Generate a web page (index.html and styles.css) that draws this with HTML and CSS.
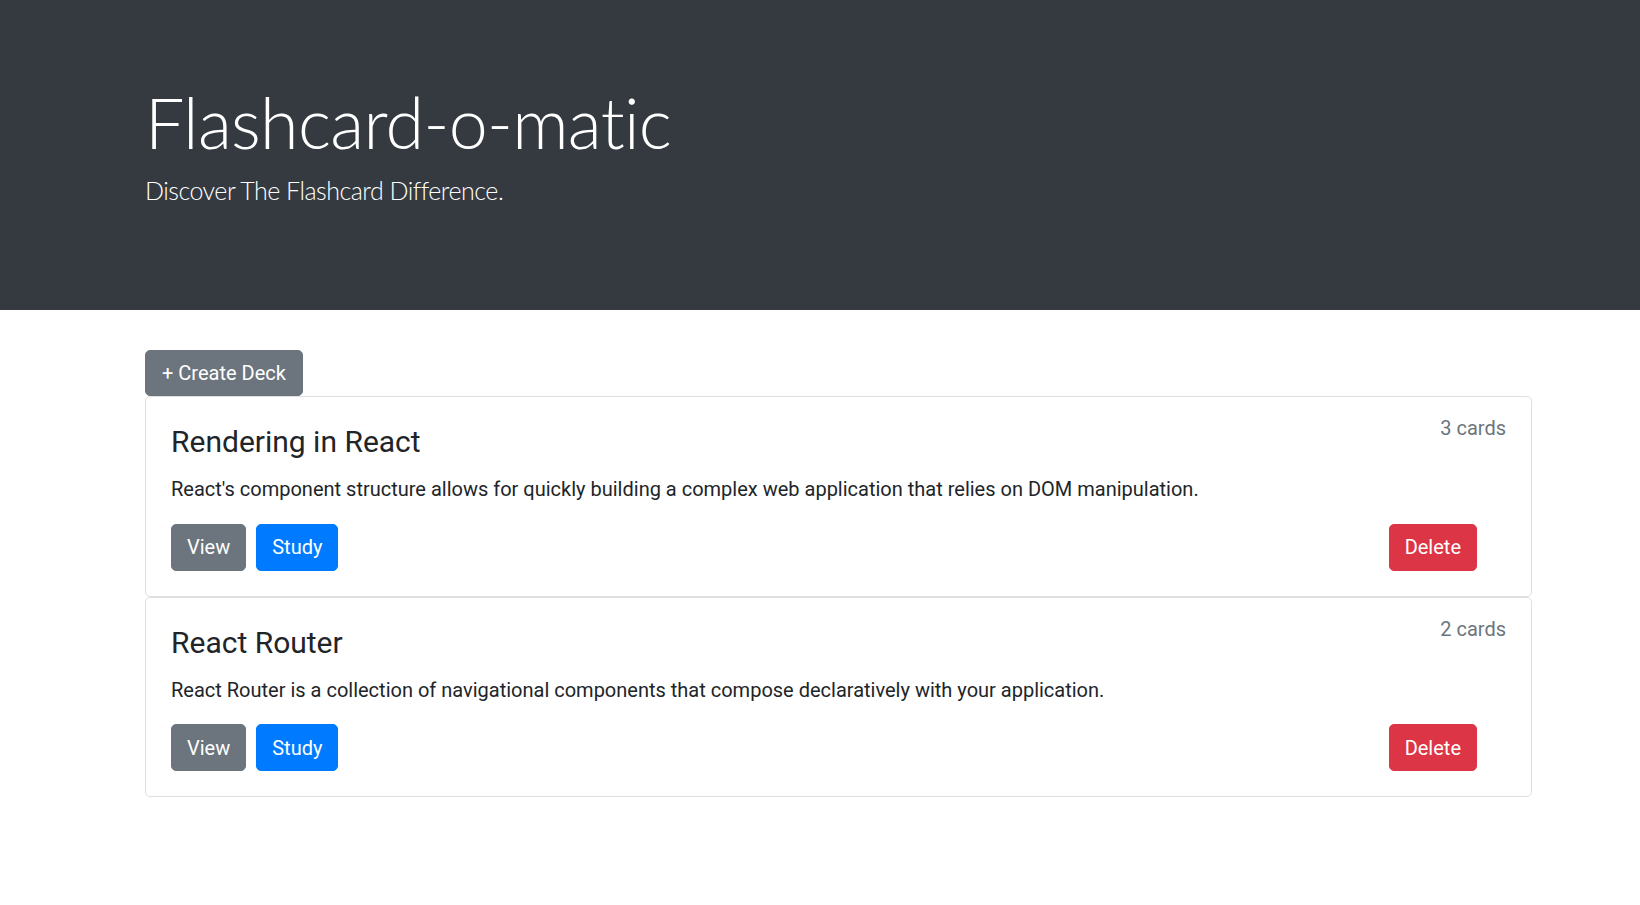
FILE: index.html
```html
<!DOCTYPE html>
<html lang="en">
<head>
<meta charset="utf-8">
<title>Flashcard-o-matic</title>
<link rel="stylesheet" href="styles.css">
</head>
<body>
<header class="jumbotron">
  <div class="container">
    <h1 class="display">Flashcard-o-matic</h1>
    <p class="lead">Discover The Flashcard Difference.</p>
  </div>
</header>
<main class="container">
  <button class="btn btn-secondary btn-create">+ Create Deck</button>
  <div class="deck-list">
    <article class="card">
      <div class="card-body">
        <div class="card-head">
          <h4 class="card-title">Rendering in React</h4>
          <span class="count">3 cards</span>
        </div>
        <p class="card-text">React's component structure allows for quickly building a complex web application that relies on DOM manipulation.</p>
        <div class="actions">
          <button class="btn btn-secondary">View</button>
          <button class="btn btn-primary">Study</button>
          <button class="btn btn-danger push">Delete</button>
        </div>
      </div>
    </article>
    <article class="card">
      <div class="card-body">
        <div class="card-head">
          <h4 class="card-title">React Router</h4>
          <span class="count">2 cards</span>
        </div>
        <p class="card-text">React Router is a collection of navigational components that compose declaratively with your application.</p>
        <div class="actions">
          <button class="btn btn-secondary">View</button>
          <button class="btn btn-primary">Study</button>
          <button class="btn btn-danger push">Delete</button>
        </div>
      </div>
    </article>
  </div>
</main>
</body>
</html>
```
FILE: styles.css
```css
* { box-sizing: border-box; }
html, body { margin: 0; padding: 0; }
body {
  font-family: Roboto, "Liberation Sans", sans-serif;
  font-size: 20px;
  line-height: 1.5;
  color: #212529;
  background: #fff;
}
.container {
  width: 1387px;
  margin-left: 145px;
}
.jumbotron {
  background: #343a40;
  color: #fff;
  padding: 80px 0;
  margin-bottom: 40px;
}
.display {
  font-family: Lato, Roboto, sans-serif;
  font-weight: 300;
  font-size: 70px;
  line-height: 1.2;
  letter-spacing: -0.7px;
  margin: 0 0 8px 0;
}
.lead {
  font-family: Lato, Roboto, sans-serif;
  font-weight: 300;
  font-size: 25px;
  line-height: 1.5;
  letter-spacing: -0.5px;
  margin: 0 0 20px 0;
}
.btn {
  display: inline-block;
  font-family: inherit;
  font-size: 20px;
  line-height: 30px;
  font-weight: 400;
  padding: 7.5px 15px;
  border: 1.25px solid transparent;
  border-radius: 5px;
  color: #fff;
  cursor: pointer;
}
.btn-create { padding: 7px 16px 7.5px 16px; }
.btn-secondary { background: #6c757d; border-color: #6c757d; }
.btn-primary { background: #007bff; border-color: #007bff; }
.btn-danger { background: #dc3545; border-color: #dc3545; }
.deck-list { display: flex; flex-direction: column; }
.card {
  border: 1px solid #dfdfdf;
  border-radius: 5px;
  background: #fff;
}
.card-body { padding: 25px; }
.card-head {
  display: flex;
  justify-content: space-between;
  align-items: flex-start;
}
.card-title {
  font-size: 30px;
  font-weight: 400;
  line-height: 1.2;
  margin: 0 0 13px 0;
  padding-top: 2px;
}
.count {
  color: #6c757d;
  margin-top: -9px;
}
.card-text {
  margin: 0 0 20px 0;
  padding-top: 1px;
  height: 30.5px;
}
.actions {
  display: flex;
  gap: 10px;
}
.push { margin-left: auto; margin-right: 29px; }
```
